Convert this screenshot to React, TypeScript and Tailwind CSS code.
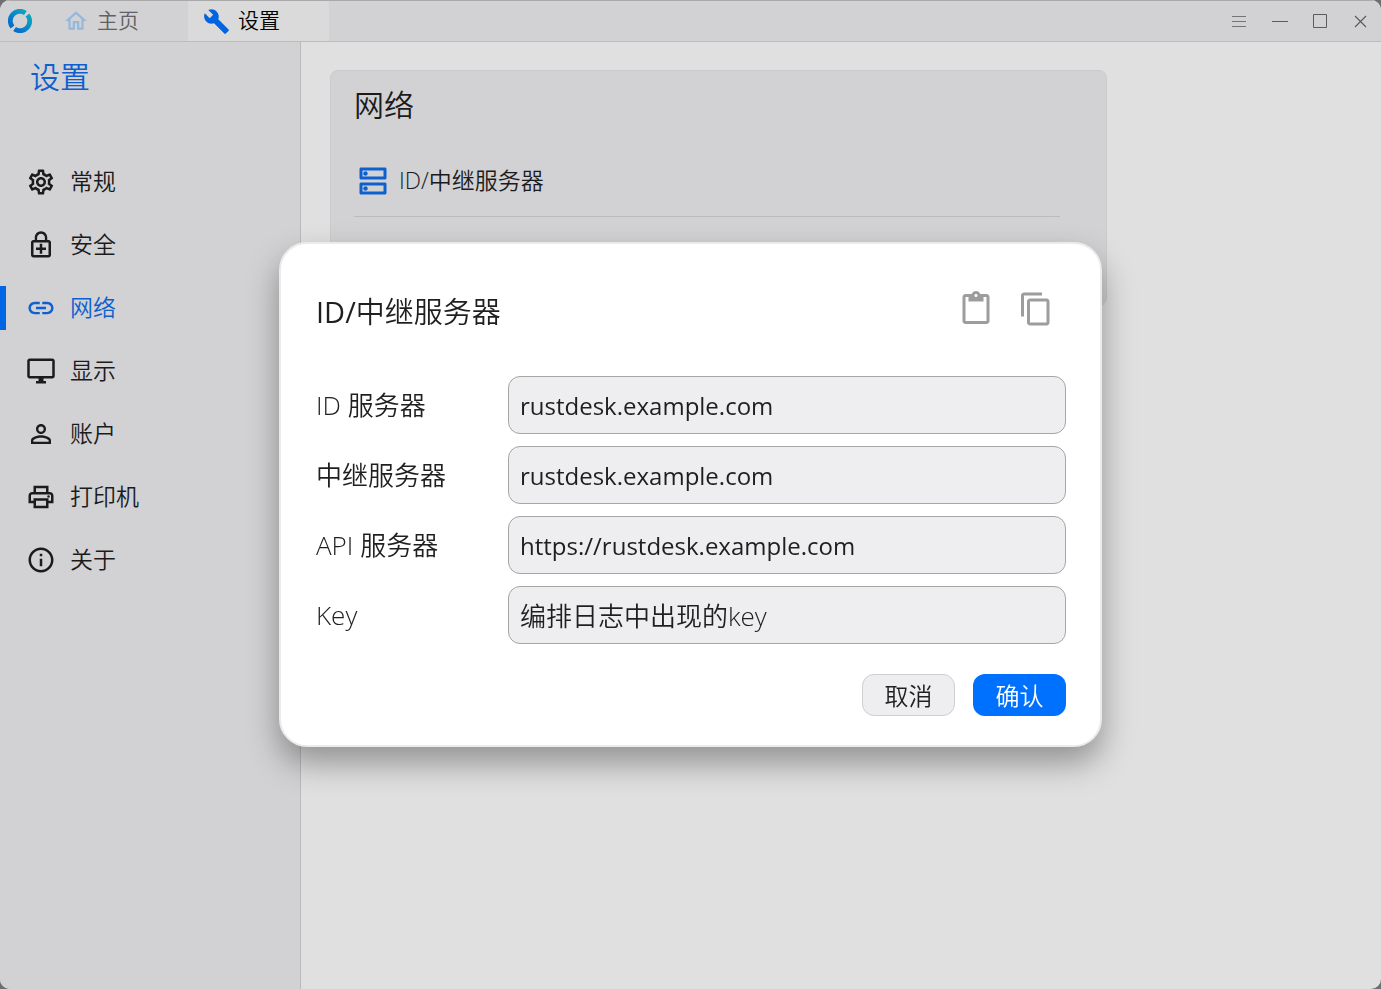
import type { ReactNode } from "react";
import type { IconType } from "react-icons";
import {
  MdBuild,
  MdContentPaste,
  MdInfoOutline,
  MdLink,
  MdOutlineContentCopy,
  MdOutlineDesktopWindows,
  MdOutlineDns,
  MdOutlineEnhancedEncryption,
  MdOutlineHome,
  MdOutlinePrint,
  MdOutlineSettings,
  MdPersonOutline,
} from "react-icons/md";

interface NavItem {
  label: string;
  icon: IconType;
  active?: boolean;
}

const navItems: NavItem[] = [
  { label: "常规", icon: MdOutlineSettings },
  { label: "安全", icon: MdOutlineEnhancedEncryption },
  { label: "网络", icon: MdLink, active: true },
  { label: "显示", icon: MdOutlineDesktopWindows },
  { label: "账户", icon: MdPersonOutline },
  { label: "打印机", icon: MdOutlinePrint },
  { label: "关于", icon: MdInfoOutline },
];

const fields = [
  { id: "id-server", label: "ID 服务器", value: "rustdesk.example.com", font: "text-[24px] font-normal" },
  { id: "relay-server", label: "中继服务器", value: "rustdesk.example.com", font: "text-[24px] font-normal" },
  { id: "api-server", label: "API 服务器", value: "https://rustdesk.example.com", font: "text-[24px] font-normal" },
  { id: "key", label: "Key", value: "编排日志中出现的key", font: "text-[26px]" },
];

function Logo() {
  return (
    <svg viewBox="0 0 24 24" className="size-6" fill="none" strokeWidth="4.8">
      <defs>
        <linearGradient id="logo" gradientUnits="userSpaceOnUse" x1="2" y1="22" x2="22" y2="2">
          <stop offset="0" stopColor="#0660d0" />
          <stop offset="1" stopColor="#0bb0bd" />
        </linearGradient>
      </defs>
      <path d="M4.5 18A9.6 9.6 0 0 1 17.4 4" stroke="url(#logo)" />
      <path d="M19.5 6A9.6 9.6 0 0 1 6.6 20" stroke="url(#logo)" />
    </svg>
  );
}

function WindowButton({ label, children }: { label: string; children: ReactNode }) {
  return (
    <button aria-label={label} className="flex size-10 items-center justify-center">
      <svg viewBox="0 0 16 16" className="size-4" fill="none" stroke="#5c5c5e">
        {children}
      </svg>
    </button>
  );
}

function TitleBar() {
  return (
    <header className="flex h-[42px] shrink-0 items-stretch border-t border-b border-t-[#a9a9ab] border-b-[#bdbdbf] bg-[#d2d2d4]">
      <div className="flex w-12 items-center pl-2">
        <Logo />
      </div>
      <button className="flex w-[140px] items-center gap-2 pl-[15px] text-[21px] text-[#616163]">
        <MdOutlineHome className="size-[26px] text-[#94b7dc]" />
        主页
      </button>
      <button className="flex w-[141px] items-center gap-2 bg-[#dadada] pl-[15px] text-[21px] text-black">
        <MdBuild className="size-[27px] text-[#0264e0]" />
        设置
      </button>
      <div className="ml-auto flex items-center pr-px">
        <WindowButton label="菜单">
          <path d="M0 3.5h14M0 8.5h14M0 13.5h14" strokeWidth="0.8" />
        </WindowButton>
        <WindowButton label="最小化">
          <path d="M0 8.5h16" />
        </WindowButton>
        <WindowButton label="最大化">
          <path d="M1.5 1.5h13v13h-13z" />
        </WindowButton>
        <WindowButton label="关闭">
          <path d="M3 3l11 11M14 3l-11 11" strokeWidth="1.2" />
        </WindowButton>
      </div>
    </header>
  );
}

function Sidebar() {
  return (
    <aside className="w-[301px] shrink-0 border-r border-[#bababc] bg-[#d2d2d4]">
      <h1 className="flex h-[68px] items-center pl-[30px] text-[30px] text-[#0f60cf]">设置</h1>
      <nav className="mt-10">
        {navItems.map(({ label, icon: Icon, active }) => (
          <a
            key={label}
            href="#"
            className={`flex h-[63px] items-center text-[23px] ${active ? "text-[#0f60cf]" : "text-[#1b1b1c]"}`}
          >
            <span className={`h-11 w-1.5 ${active ? "bg-[#0066e6]" : ""}`} />
            <Icon className="mr-[14px] ml-5 size-[30px]" />
            {label}
          </a>
        ))}
      </nav>
    </aside>
  );
}

function NetworkCard() {
  return (
    <section className="h-[236px] max-w-[777px] rounded-lg border border-[#cbcbcd] bg-[#d2d2d4] pr-[46px] pl-[23px]">
      <h2 className="flex h-[66px] items-center text-[30px] text-[#1b1b1c]">网络</h2>
      <button className="mt-2 flex h-[72px] w-full items-center gap-2 border-b border-[#bcbcbe] pl-px text-[23px] text-[#1b1b1c]">
        <MdOutlineDns className="size-9 text-[#0f60cf]" />
        ID/中继服务器
      </button>
    </section>
  );
}

function ServerDialog() {
  return (
    <div className="fixed inset-0 flex items-center justify-center">
      <form
        role="dialog"
        aria-labelledby="dialog-title"
        className="w-[823px] rounded-[28px] border-2 border-[#ebebec] bg-white pt-9 pr-[34px] pb-[29px] pl-[35px] text-[#1f1f1f] shadow-[0_16px_32px_rgba(0,0,0,0.35)]"
      >
        <div className="flex h-16 items-center pr-3">
          <h2 id="dialog-title" className="text-[29px]">
            <span className="font-medium">ID/</span>中继服务器
          </h2>
          <div className="ml-auto flex gap-6 pb-1.5 text-[#9d9d9d]">
            <button type="button" aria-label="粘贴">
              <MdContentPaste className="size-9" />
            </button>
            <button type="button" aria-label="复制">
              <MdOutlineContentCopy className="size-9" />
            </button>
          </div>
        </div>
        <div className="mt-8 flex flex-col gap-3">
          {fields.map((field) => (
            <div key={field.id} className="flex items-center">
              <label htmlFor={field.id} className="w-48 pt-px text-[26px]">
                {field.label}
              </label>
              <input
                id={field.id}
                defaultValue={field.value}
                className={`h-[58px] min-w-0 flex-1 rounded-xl border border-[#a5a5a5] bg-[#eeeef0] px-[11px] outline-none ${field.font}`}
              />
            </div>
          ))}
        </div>
        <div className="mt-[30px] flex justify-end gap-[18px] text-[24px]">
          <button type="button" className="h-[42px] w-[93px] rounded-xl border border-[#cfcfd1] bg-[#eeeef0] pt-0.5">
            取消
          </button>
          <button type="submit" className="h-[42px] w-[93px] rounded-xl bg-[#0071ff] pt-0.5 text-white">
            确认
          </button>
        </div>
      </form>
    </div>
  );
}

export default function App() {
  return (
    <div className="min-h-screen bg-[#6f6f71] font-['Open_Sans','Noto_Sans_CJK_SC',sans-serif] font-[350]">
      <div className="flex min-h-screen flex-col overflow-hidden rounded-[10px] bg-[#e0e0e0]">
        <TitleBar />
        <div className="flex flex-1">
          <Sidebar />
          <main className="flex-1 px-[29px] pt-7">
            <NetworkCard />
          </main>
        </div>
      </div>
      <ServerDialog />
    </div>
  );
}
